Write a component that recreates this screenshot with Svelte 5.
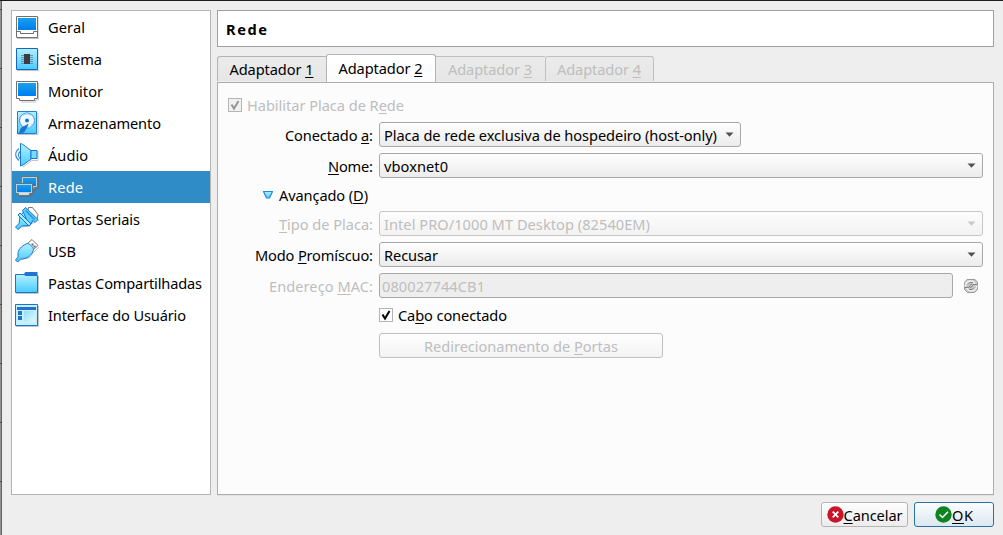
<script>
  const sections = [
    { id: 'general', name: 'Geral', width: 37 },
    { id: 'system', name: 'Sistema', width: 54 },
    { id: 'display', name: 'Monitor', width: 55 },
    { id: 'storage', name: 'Armazenamento', width: 113 },
    { id: 'audio', name: 'Áudio', width: 40 },
    { id: 'network', name: 'Rede', width: 35 },
    { id: 'serial', name: 'Portas Seriais', width: 92 },
    { id: 'usb', name: 'USB', width: 28 },
    { id: 'folders', name: 'Pastas Compartilhadas', width: 154 },
    { id: 'ui', name: 'Interface do Usuário', width: 138 }
  ];
  let current = $state('network');
  let cable = $state(true);
  const ticks = [9, 68, 127, 186, 245, 304, 363, 422, 481];

  // Tracks a label out to the given width in pixels.
  function fit(node, width) {
    const spacing = (width - node.getBoundingClientRect().width) / (node.textContent.length - 1);
    node.style.letterSpacing = `${spacing}px`;
    node.style.marginRight = `${-spacing}px`;
  }
</script>

{#snippet label(before, key, after, width)}<span class="text" use:fit={width}>{before}<u>{key}</u>{after}</span>{/snippet}

{#snippet arrow()}
  <svg class="arrow" width="9" height="5" viewBox="0 0 9 5"><path d="M.5 .5h8L4.5 4.7z" fill="currentColor" /></svg>
{/snippet}

{#snippet icon(id)}
  <svg class="icon" width="24" height="24" viewBox="0 0 24 24" fill="none">
    {#if id === 'general'}
      <path d="M2 23.5h22V2" stroke="#c4c4c4" />
      <path d="M1.5 1.5h21v21h-21z" fill="#fff" stroke="#707070" />
      <path d="M3 3h18v12H3z" fill="url(#screen)" />
      <path d="M2 16.5h3.500v2h13v-2H22" stroke="#707070" />
    {:else if id === 'system'}
      <path d="M2 23.500h22V2" stroke="#c4c4c4" />
      <path d="M1.500 1.500h21v21h-21z" fill="url(#pale)" stroke="#1565c8" />
      <path d="M6 8.500h12M6 10.500h12M6 12.500h12M6 14.500h12M6 16.500h12" stroke="#6d91a6" />
      <path d="M9 7h6v10H9z" fill="#3a3b45" />
    {:else if id === 'display'}
      <path d="M23.500 4v17h-3v2H6" stroke="#c4c4c4" />
      <path d="M1.500 2.500h21v17h-3v2h-15v-2h-3z" fill="#fff" stroke="#707070" />
      <path d="M3 4h18v13H3z" fill="url(#screen)" />
    {:else if id === 'storage'}
      <path d="M3 23.500h20V2" stroke="#c4c4c4" />
      <path d="M2.500 .5h19v22h-19z" fill="url(#pale)" stroke="#2480d2" />
      <circle cx="12" cy="9.500" r="7.500" fill="#eefaff" stroke="#3c91d8" />
      <path d="M8 4.500a7 7 0 0 1 8 0M17.500 13a7 7 0 0 1-4 3.500" stroke="#a8dff8" stroke-width="1.500" />
      <circle cx="12" cy="9.500" r="2" fill="#1974ce" />
      <path d="M13 13.500 6.500 17 4.500 21.500 9 21z" fill="#1974ce" stroke="#1974ce" />
      <path d="M2.500 19v3.500h7" stroke="#1974ce" />
    {:else if id === 'audio'}
      <path d="M8 24l9-6.500h6V8" stroke="#c4c4c4" />
      <path d="M4 5.500C-.4 9-.4 14 4 17.500M5 8.500c-2 2-2 5 0 7" stroke="#3289dc" stroke-width="1.100" />
      <path d="M5.500.5c2 0 8 5.500 10.500 7v9c-3 1-7 6-10.500 6.500z" fill="url(#pale)" stroke="#1974d0" />
      <path d="M16 7.500h6v8h-6z" fill="#78dcff" stroke="#1974d0" />
    {:else if id === 'network'}
      <path d="M8 2h16v12h-3v2H8zM3 9h16v11h-3v2H4z" fill="#4c7794" />
      <path d="M6.500 1.500h16v11h-2v2H7" fill="#7b898f" stroke="#66747b" />
      <path d="M7.500 2.500h14v9h-14z" fill="url(#screen)" stroke="#bdd0dc" />
      <path d="M.5 8.500h17v10h-3v2h-11v-2h-3z" fill="#d5dfe5" stroke="#65747d" />
      <path d="M1.500 9.500h15v8h-15z" fill="url(#screen)" stroke="#bdd0dc" />
    {:else if id === 'serial'}
      <path d="M13.500.5h4l5.500 7-1 5-9-9z" fill="#fafafa" stroke="#777" />
      <path d="M3 23l3-3 9-1M17 17l4-3M23 14l1-1" stroke="#bdbdbd" />
      <path d="M9 4.500 5 9 4 16.500l-3.500 3.500 2.500 2.500 3.500-3.500 8.500-.5 3.500-5.500z" fill="url(#pale)" stroke="#1974d0" />
      <path d="M7.500 3.500 10.500.5 23 12.500l-3 3-2-2-3 4-2-2z" fill="#5bcfff" stroke="#1974d0" />
      <path d="M3 8l2-2 11 11-2 2z" fill="#a3edff" stroke="#1974d0" />
      <path d="M10.500 3.500l9 9" stroke="#2d8ee0" stroke-width="1.500" />
    {:else if id === 'usb'}
      <path d="M3 23l4-3 7-1 5-6 5-5" stroke="#c4c4c4" />
      <path d="M12.500 4.500 17 .5l6 6-4.500 4z" fill="#fff" stroke="#777" />
      <path d="M16.500 4.500h2v2h-2zM18.500 6.500h2v2h-2z" fill="#656565" />
      <path d="M12.500 4.500C9 5.500 3 9.500 3 14.500v3.500L.5 21l2 2L5.500 20c6 .5 12-4 13-9.500 0-2-4-6-6-6z" fill="url(#pale)" stroke="#1974d0" />
    {:else if id === 'folders'}
      <path d="M1 22.500h22.500V5" stroke="#c4c4c4" />
      <path d="M9 4V2.500L10.500 1h12v4z" fill="#2376cf" />
      <path d="M.5 3.500H9l2 1h11.500v17H.5z" fill="url(#pale)" stroke="#1974d0" />
    {:else}
      <path d="M1 23.500h22.500V3" stroke="#c4c4c4" />
      <path d="M.5 1.500h22v21H.5z" fill="#c3f1ff" stroke="#1974d0" />
      <path d="M2 4h19v3H2zM3 8h4v4H3zM3 13h4v4H3z" fill="#2671cc" />
      <path d="M9 8h11v11H9z" fill="url(#pane)" />
    {/if}
  </svg>
{/snippet}

<svg class="defs" width="0" height="0" aria-hidden="true">
  <defs>
    <linearGradient id="screen" x2="0" y2="1"><stop stop-color="#18a2e8" /><stop offset="1" stop-color="#007cf0" /></linearGradient>
    <linearGradient id="pale" x2="0" y2="1"><stop stop-color="#b2f1ff" /><stop offset="1" stop-color="#48cbff" /></linearGradient>
    <linearGradient id="pane" x2="1" y2="1"><stop stop-color="#8fe0fb" /><stop offset="1" stop-color="#e2f8ff" /></linearGradient>
  </defs>
</svg>

<div class="window">
  <div class="edge">
    {#each ticks as y}<i style="top: {y}px"></i>{/each}
  </div>
  <nav>
    {#each sections as s}
      <button class="section" class:selected={current === s.id} onclick={() => (current = s.id)}>
        {@render icon(s.id)}<span class="text" use:fit={s.width}>{s.name}</span>
      </button>
    {/each}
  </nav>
  <main>
    <header><span class="text" use:fit={41}>Rede</span></header>
    <div class="tabs">
      <div class="tab">{@render label('Adaptador ', '1', '', 84)}</div>
      <div class="tab active">{@render label('Adaptador ', '2', '', 84)}</div>
      <div class="tab off">{@render label('Adaptador ', '3', '', 84)}</div>
      <div class="tab off last">{@render label('Adaptador ', '4', '', 84)}</div>
    </div>
    <section class="panel">
      <div class="enable off">
        <span class="check"><svg width="12" height="12" viewBox="0 0 12 12"><path d="M2.500 5.500 5 9.500 9.500 2" /></svg></span>
        {@render label('Habilitar Placa de R', 'e', 'de', 157)}
      </div>
      <div class="row">
        <div class="name">{@render label('Conectado ', 'a', ':', 88)}</div>
        <div class="combo short"><span class="text" use:fit={333}>Placa de rede exclusiva de hospedeiro (host-only)</span>{@render arrow()}</div>
      </div>
      <div class="row">
        <div class="name">{@render label('', 'N', 'ome:', 45)}</div>
        <div class="combo"><span class="text" use:fit={64}>vboxnet0</span>{@render arrow()}</div>
      </div>
      <div class="advanced">
        <svg width="12" height="10" viewBox="0 0 12 10"><path d="M1.500 1.500h9L7.500 8h-3z" fill="url(#pale)" stroke="#2488d8" stroke-width="1.200" stroke-linejoin="round" /></svg>
        {@render label('Avançado (', 'D', ')', 89)}
      </div>
      <div class="row off">
        <div class="name">{@render label('', 'T', 'ipo de Placa:', 94)}</div>
        <div class="combo"><span class="text" use:fit={266}>Intel PRO/1000 MT Desktop (82540EM)</span>{@render arrow()}</div>
      </div>
      <div class="row">
        <div class="name">{@render label('Modo ', 'P', 'romíscuo:', 118)}</div>
        <div class="combo"><span class="text" use:fit={54}>Recusar</span>{@render arrow()}</div>
      </div>
      <div class="row off">
        <div class="name">{@render label('Endereço ', 'M', 'AC:', 104)}</div>
        <div class="field"><span class="text" use:fit={103}>080027744CB1</span></div>
        <svg class="refresh" width="16" height="16" viewBox="0 0 16 16" fill="none">
          <path d="M4 1.500h8l2.500 3v7l-3 3h-7l-3-3v-7z" fill="#c9c9c9" stroke="#999" stroke-linejoin="round" />
          <path d="M2 8.500C2.500 5 4 3 7.500 3c2.500 0 3.500 1 4.500 3M14 7.500c-.5 3.500-2 5.500-5.500 5.500C6 13 5 12 4 10" stroke="#f0f0f0" stroke-width="1.500" />
          <path d="M2 9.500h4l1-2 2-1.500M14 6.500h-4l-1 2-2 1.500M5 6.500l2-2h3M11 9.500l-2 2H6" stroke="#858585" />
        </svg>
      </div>
      <div class="cable">
        <button class="check" aria-label="Cabo conectado" onclick={() => (cable = !cable)}>
          {#if cable}<svg width="12" height="12" viewBox="0 0 12 12"><path d="M2.500 5.500 5 9.500 9.500 2" /></svg>{/if}
        </button>
        {@render label('Ca', 'b', 'o conectado', 109)}
      </div>
      <div class="forward off">{@render label('Redirecionamento de ', 'P', 'ortas', 194)}</div>
    </section>
    <footer>
      <button class="cancel">
        <svg width="17" height="17" viewBox="0 0 17 17"><circle cx="8.500" cy="8.500" r="8.200" fill="#c7162b" /><path d="M5.700 5.700l5.600 5.600M11.300 5.700l-5.600 5.600" stroke="#fff" stroke-width="1.700" /></svg>
        {@render label('', 'C', 'ancelar', 59)}
      </button>
      <button class="ok">
        <svg width="17" height="17" viewBox="0 0 17 17"><circle cx="8.500" cy="8.500" r="8.200" fill="#0e8420" /><path d="M4.500 8.500l3 3L13 5.800" fill="none" stroke="#fff" stroke-width="1.500" /></svg>
        {@render label('', 'O', 'K', 21)}
      </button>
    </footer>
  </main>
</div>

<style>
  :global(body) { margin: 0; overflow: hidden; }
  .defs { position: absolute; }
  .window {
    display: flex; box-sizing: border-box; width: 1003px; height: 535px;
    border-top: 1px solid #1e1a1d; background: #eee; color: #000;
    font: 14.6px/20px "Noto Sans", "Open Sans", sans-serif;
  }
  .window *, .window { box-sizing: border-box; }
  button { font: inherit; color: inherit; margin: 0; padding: 0; }
  .text { display: inline-block; white-space: pre; flex: none; }
  u { text-decoration: underline 1px; text-underline-offset: 2px; text-decoration-skip-ink: none; }
  .edge { position: relative; width: 2px; background: linear-gradient(90deg, #929292 50%, #666 50%); }
  .edge i { position: absolute; left: 0; width: 2px; height: 1px; margin-top: -1px; background: #4c4c4c; }
  nav { width: 200px; height: 485px; margin: 9px 6px 0 9px; border: 1px solid #b4b4b4; background: #fff; }
  .section { display: flex; align-items: center; width: 100%; height: 32px; padding-left: 3px; gap: 9px; border: 0; background: none; text-align: left; }
  .selected { background: #308cc6; color: #fff; }
  .icon { flex: none; }
  main { width: 777px; padding-top: 9px; }
  header { display: flex; align-items: center; height: 37px; padding-left: 8px; border: 1px solid #a0a0a0; background: #fff; font-weight: 700; }
  .tabs { display: flex; align-items: flex-end; height: 35px; padding-bottom: 1px; }
  .tab {
    display: flex; justify-content: center; align-items: center; width: 109px; height: 25px;
    border: 1px solid #b4b4b4; border-width: 1px 0 0 1px; border-radius: 3px 0 0 0;
    background: linear-gradient(#ebebeb, #e6e6e6); padding-right: 1px;
  }
  .tab.active { z-index: 1; width: 110px; height: 28px; margin-bottom: -1px; border-width: 1px 1px 0; border-radius: 3px 3px 0 0; background: linear-gradient(#fff, #fcfcfc); padding-bottom: 1px; }
  .tab.active + .tab { border-left: 0; border-radius: 0; }
  .tab.off { border-color: #c0c0c0; }
  .tab.last { border-right-width: 1px; border-radius: 3px 3px 0 0; }
  .off { color: #bebebe; }
  .panel { display: flex; flex-direction: column; height: 413px; padding: 12px 10px 0; border: 1px solid #adadad; background: #fcfcfc; box-shadow: 0 1px #e2e2e2; }
  .enable, .cable, .advanced { display: flex; align-items: center; }
  .enable { height: 20px; margin-bottom: 7px; gap: 5px; }
  .check { display: flex; align-items: center; justify-content: center; width: 14px; height: 14px; border: 1px solid #b4b4b4; background: #fff; flex: none; }
  .check svg { flex: none; }
  .check path { fill: none; stroke: #000; stroke-width: 2; }
  .enable .check { background: #f1f1f1; }
  .enable path { stroke: #969696; }
  .row { display: flex; align-items: center; height: 25px; margin-bottom: 6px; }
  .name { display: flex; justify-content: flex-end; width: 145px; margin-right: 6px; flex: none; }
  .combo {
    display: flex; align-items: center; justify-content: space-between; flex: 1; height: 25px; padding: 0 6px 0 4px;
    border: 1px solid #a8a8a8; border-radius: 3px; background: linear-gradient(#fefefe, #ececec);
  }
  .combo.short { flex: none; width: 362px; }
  .arrow { color: #505050; flex: none; }
  .off .combo { border-color: #c6c6c6; background: linear-gradient(#fdfdfd, #f2f2f2); }
  .off .arrow { color: #c8c8c8; }
  .advanced { height: 33px; margin: -6px 0 0 34px; gap: 5px; }
  .field { display: flex; align-items: center; width: 574px; height: 25px; padding-left: 2px; border: 1px solid #a8a8a8; border-radius: 3px; background: #eee; }
  .refresh { margin-left: 10px; }
  .cable { height: 20px; margin: 1px 0 8px 151px; gap: 5px; }
  .forward { display: flex; align-items: center; justify-content: center; width: 284px; height: 25px; margin-left: 151px; border: 1px solid #c0c0c0; border-radius: 3px; background: linear-gradient(#fefefe, #f3f3f3); }
  footer { display: flex; justify-content: flex-end; gap: 6px; margin-top: 7px; }
  footer button { display: flex; align-items: center; justify-content: center; height: 25px; border: 1px solid #b4b4b4; border-radius: 3px; background: linear-gradient(#fefefe, #ececec); }
  .cancel { width: 87px; }
  .ok { width: 80px; border-color: #2872a3; background: linear-gradient(#fbfdff, #dce7ef); }
</style>
